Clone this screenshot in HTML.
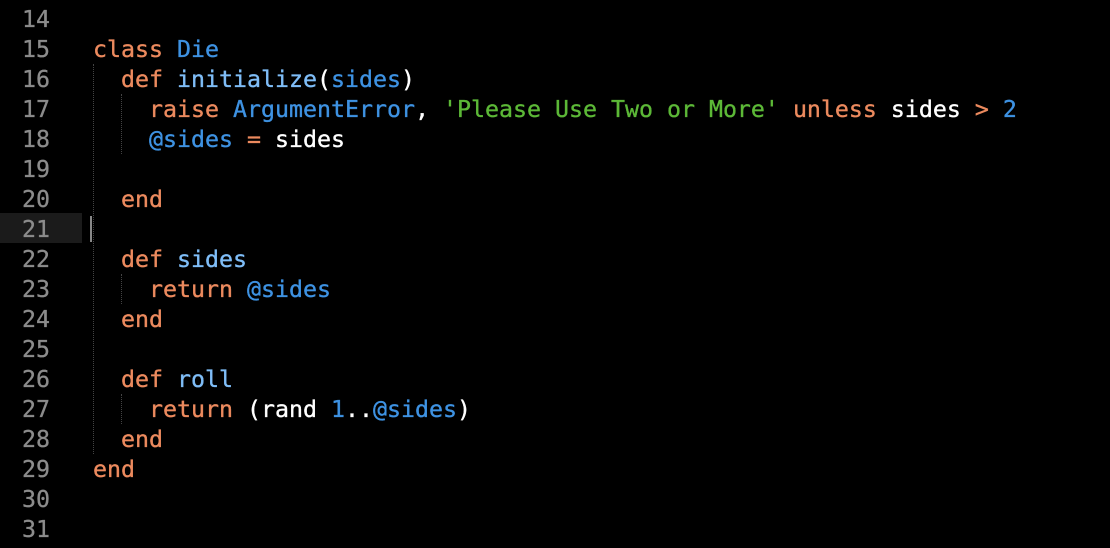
<!DOCTYPE html>
<html><head><style>
body{margin:0;background:#000;width:1110px;height:548px;overflow:hidden;position:relative;font-family:"DejaVu Sans Mono","Liberation Mono",monospace;font-size:23.25px;}
.ln{position:absolute;left:0;width:50px;text-align:right;color:#8c8c8c;height:30px;line-height:30px;-webkit-text-stroke:0.3px #8c8c8c}
.c{position:absolute;left:93px;height:30px;line-height:30px;white-space:pre;color:#fff;-webkit-text-stroke:0.35px currentColor}
.k{color:#ec8a5e}.b{color:#3e92e2}.m{color:#7fbdf7}.g{color:#5cb837}.w{color:#fff}
.hl{position:absolute;left:0;top:213px;width:82px;height:30px;background:#1b1b1b}
.guide{position:absolute;width:0;border-left:1px dotted #444}
</style></head><body>
<div class="hl"></div>
<div style="position:absolute;left:90px;top:216px;width:2px;height:26px;background:#888"></div>
<div class="guide" style="left:93px;top:64px;height:390px"></div>
<div class="guide" style="left:121px;top:94px;height:60px"></div>
<div class="guide" style="left:121px;top:274px;height:30px"></div>
<div class="guide" style="left:121px;top:394px;height:30px"></div>

<div class="ln" style="top:5px">14</div>
<div class="ln" style="top:35px">15</div>
<div class="ln" style="top:65px">16</div>
<div class="ln" style="top:95px">17</div>
<div class="ln" style="top:125px">18</div>
<div class="ln" style="top:155px">19</div>
<div class="ln" style="top:185px">20</div>
<div class="ln" style="top:215px">21</div>
<div class="ln" style="top:245px">22</div>
<div class="ln" style="top:275px">23</div>
<div class="ln" style="top:305px">24</div>
<div class="ln" style="top:335px">25</div>
<div class="ln" style="top:365px">26</div>
<div class="ln" style="top:395px">27</div>
<div class="ln" style="top:425px">28</div>
<div class="ln" style="top:455px">29</div>
<div class="ln" style="top:485px">30</div>
<div class="ln" style="top:515px">31</div>

<div class="c" style="top:35px"><span class="k">class</span> <span class="b">Die</span></div>
<div class="c" style="top:65px">  <span class="k">def</span> <span class="m">initialize</span>(<span class="b">sides</span>)</div>
<div class="c" style="top:95px">    <span class="k">raise</span> <span class="b">ArgumentError</span>, <span class="g">'Please Use Two or More'</span> <span class="k">unless</span> sides <span class="k">&gt;</span> <span class="b">2</span></div>
<div class="c" style="top:125px">    <span class="b">@sides</span> <span class="k">=</span> sides</div>
<div class="c" style="top:185px">  <span class="k">end</span></div>
<div class="c" style="top:245px">  <span class="k">def</span> <span class="m">sides</span></div>
<div class="c" style="top:275px">    <span class="k">return</span> <span class="b">@sides</span></div>
<div class="c" style="top:305px">  <span class="k">end</span></div>
<div class="c" style="top:365px">  <span class="k">def</span> <span class="m">roll</span></div>
<div class="c" style="top:395px">    <span class="k">return</span> (rand <span class="b">1</span>..<span class="b">@sides</span>)</div>
<div class="c" style="top:425px">  <span class="k">end</span></div>
<div class="c" style="top:455px"><span class="k">end</span></div>
</body></html>
